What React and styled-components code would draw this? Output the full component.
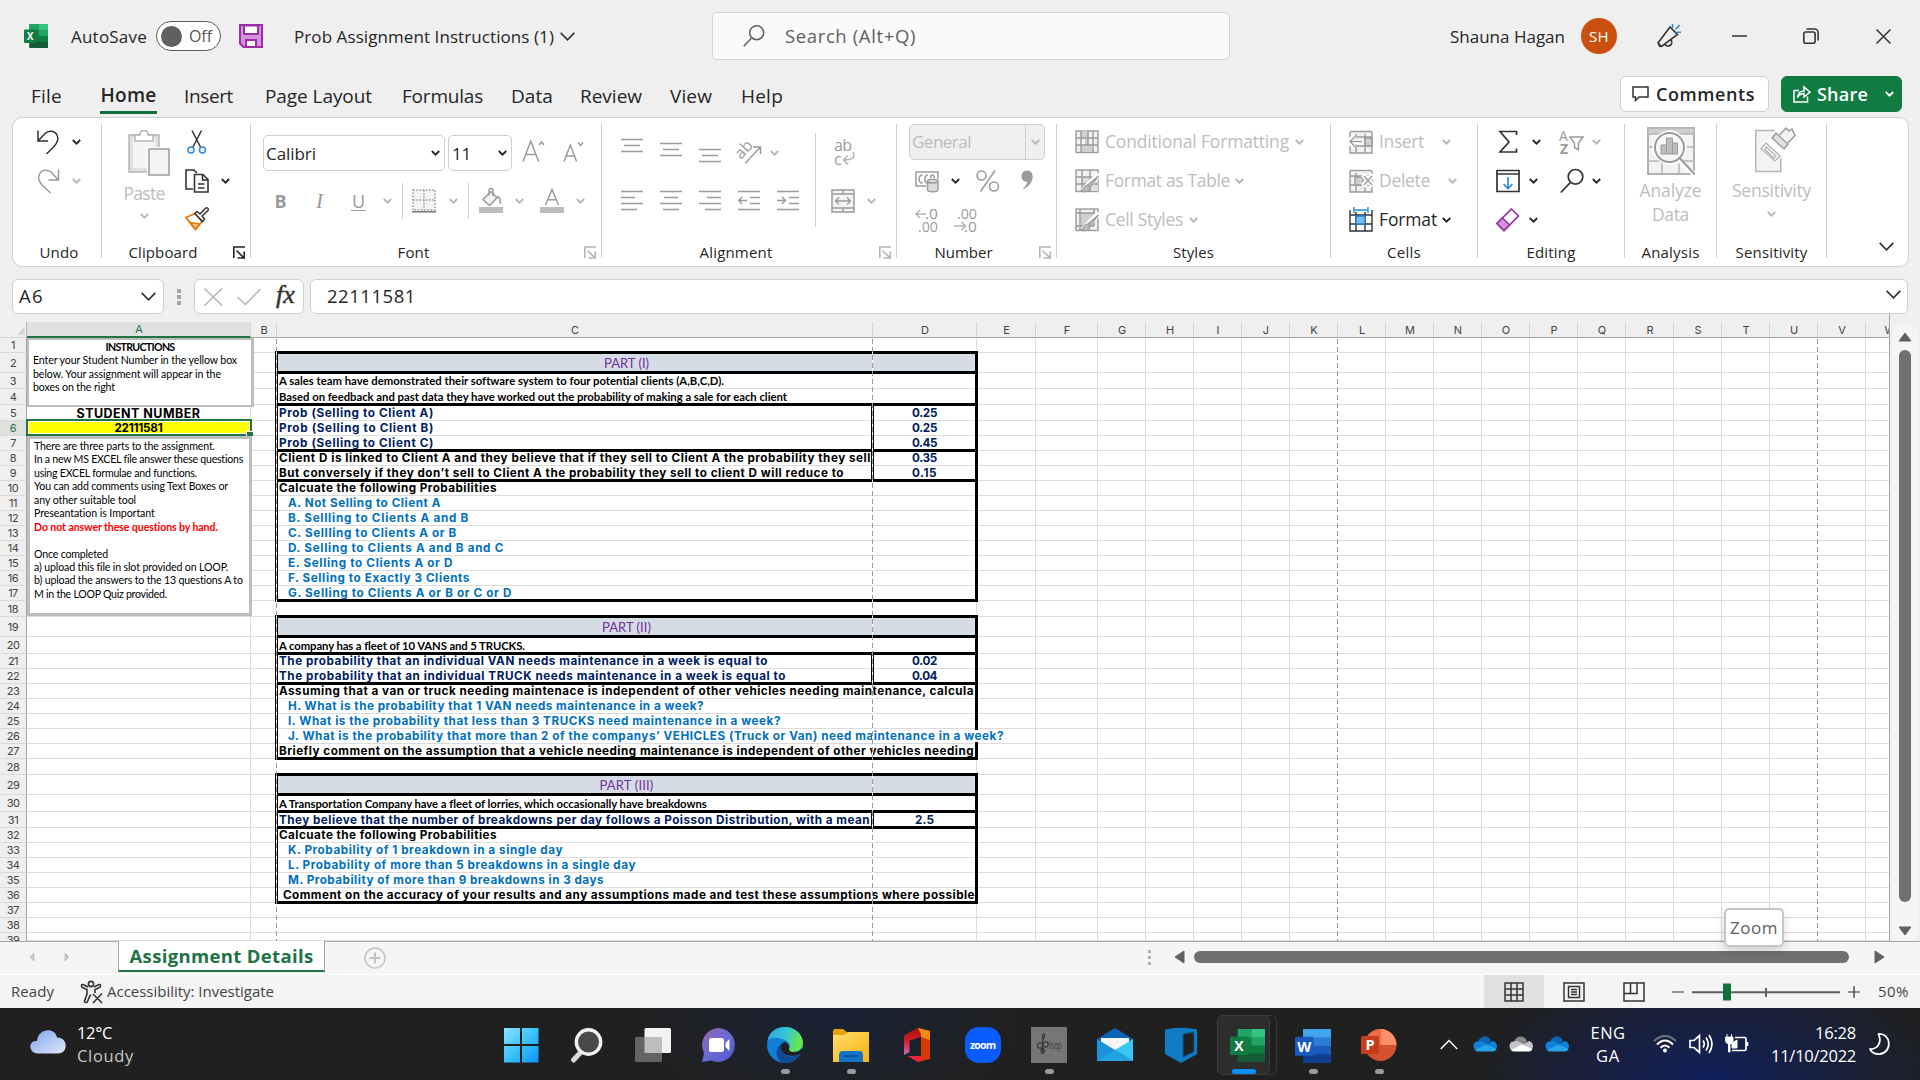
import React, { useLayoutEffect, useRef } from "react";
import styled, { createGlobalStyle, css } from "styled-components";

const GlobalStyle = createGlobalStyle`
  * { box-sizing: border-box; }
  html, body { margin: 0; padding: 0; }
  body {
    width: 1920px;
    height: 1080px;
    overflow: hidden;
    background: #efefef;
    color: #262626;
    font-family: "Open Sans", "Noto Sans", sans-serif;
    line-height: 1;
  }
  svg { display: block; flex: none; overflow: visible; }
`;

const Txt = styled.span`
  display: inline-block;
  flex: none;
  white-space: pre;
  margin-left: ${(p) => p.$l || 0}px;
`;

// spreads the letters so that the label takes the given width
const Fit = ({ w, l, children }) => {
  const ref = useRef(null);
  useLayoutEffect(() => {
    const el = ref.current;
    el.style.letterSpacing = "0px";
    const natural = el.getBoundingClientRect().width;
    el.style.letterSpacing = `${(w - natural) / el.textContent.length}px`;
  }, [w, children]);
  return (
    <Txt ref={ref} $l={l}>
      {children}
    </Txt>
  );
};

const Svg = styled.svg`
  margin-left: ${(p) => p.$l || 0}px;
  margin-top: ${(p) => p.$t || 0}px;
  fill: none;
  stroke: ${(p) => p.$c || "#333"};
  stroke-width: ${(p) => p.$s || 1.5};
`;

const Icon = ({ w = 24, h = 24, l, t, c, s, children }) => (
  <Svg width={w} height={h} viewBox={`0 0 ${w} ${h}`} $l={l} $t={t} $c={c} $s={s}>
    {children}
  </Svg>
);

const GREY = "#9b9b9b";
const PALE = "#b5b5b5";

const Caret = ({ l, t, c = "#262626" }) => (
  <Icon w={9} h={6} l={l} t={t} c={c} s={1.8}>
    <path d="M0.8 1 L4.5 4.7 L8.2 1" />
  </Icon>
);

const BigCaret = ({ l, t }) => (
  <Icon w={15} h={9} l={l} t={t} s={1.7}>
    <path d="M0.7 0.8 L7.5 7.8 L14.3 0.8" />
  </Icon>
);

/* ---------- title bar ---------- */

const TitleBar = styled.header`
  display: flex;
  align-items: center;
  height: 72px;
  font-size: 17px;
`;

const Toggle = styled.div`
  display: flex;
  align-items: center;
  width: 65px;
  height: 30px;
  margin-left: 9px;
  padding-left: 4px;
  border: 1.5px solid #5c5c5c;
  border-radius: 15px;
  background: #fff;
  color: #555;
  font-size: 16px;
`;

const Knob = styled.i`
  width: 21px;
  height: 21px;
  margin-right: 7px;
  border-radius: 50%;
  background: #606060;
`;

const Search = styled.div`
  display: flex;
  align-items: center;
  width: 518px;
  height: 48px;
  margin-left: 137px;
  padding-left: 30px;
  border: 1px solid #d2d2d2;
  border-radius: 5px;
  background: #fafafa;
  color: #606060;
  font-size: 18.5px;
`;

const Avatar = styled.div`
  display: flex;
  align-items: center;
  justify-content: center;
  width: 36px;
  height: 36px;
  margin-left: 16px;
  border-radius: 50%;
  background: #ca5010;
  color: #fff;
  font-size: 15px;
`;

const BookLogo = ({ w = 24, h = 24, l, t, letter = "X" }) => {
  const shades =
    letter === "X"
      ? ["#21a366", "#33c481", "#21a366", "#107c41", "#185c37", "#107c41"]
      : ["#41a5ee", "#41a5ee", "#2b7cd3", "#185abd", "#103f91", "#185abd"];
  return (
    <Svg width={w} height={h} viewBox="0 0 36 33" preserveAspectRatio="none" $l={l} $t={t}>
      <g stroke="none">
        <rect x="8" y="0" width="28" height="33" rx="1.5" fill={shades[3]} />
        <rect x="8" y="0" width="14" height="8.5" fill={shades[0]} />
        <rect x="22" y="0" width="14" height="8.5" fill={shades[1]} />
        <rect x={letter === "X" ? 22 : 8} y="8.5" width={letter === "X" ? 14 : 28} height="8" fill={shades[2]} />
        <rect x="8" y="24.5" width="28" height="8.5" rx="1.5" fill={shades[4]} />
        <rect x="0" y="7.5" width="18.5" height="18.5" rx="1.6" fill={shades[5]} />
        <text x="9.2" y="22" textAnchor="middle" fontFamily="Open Sans, sans-serif" fontWeight="700" fontSize="14.5" fill="#fff">
          {letter}
        </text>
      </g>
    </Svg>
  );
};

const Title = () => (
  <TitleBar>
    <BookLogo l={24} />
    <Fit w={76} l={23}>AutoSave</Fit>
    <Toggle>
      <Knob />
      <Fit w={23}>Off</Fit>
    </Toggle>
    <Icon l={18} c="#9a2fa3" s={2}>
      <path d="M1 1 H23 V23 H4.5 L1 19.5 Z" fill="#d592dd" />
      <rect x="5" y="1.5" width="14" height="8.5" fill="#fff" />
      <rect x="7" y="16" width="10" height="7" fill="#fff" />
    </Icon>
    <Fit w={260} l={31}>Prob Assignment Instructions (1)</Fit>
    <BigCaret l={6} />
    <Search>
      <Icon w={22} h={22} c="#606060">
        <circle cx="13.7" cy="7.7" r="7" />
        <path d="M8.8 12.8 L0.8 21.3" />
      </Icon>
      <Fit w={131} l={20}>Search (Alt+Q)</Fit>
    </Search>
    <Fit w={115} l={220}>Shauna Hagan</Fit>
    <Avatar>
      <Fit w={20}>SH</Fit>
    </Avatar>
    <Icon l={40} s={1.6}>
      <path d="M13 3 L20.5 10.5 L4.5 22.5 L1 19 Z M1.5 20 L3 23 M8 20.5 a3.4 3.4 0 1 0 6 -4.5" />
      <path d="M15.5 0 V4 M18.5 5.5 L22.5 1 M20 8.3 H24" stroke="#2a8dd4" />
    </Icon>
    <Icon w={15} h={2} l={51}>
      <path d="M0 1 H15" />
    </Icon>
    <Icon w={16} h={16} l={56} s={1.6}>
      <rect x="0.8" y="4" width="11.3" height="11.3" rx="2" />
      <path d="M3.5 1 H11.5 a3.6 3.6 0 0 1 3.6 3.6 V12.5" />
    </Icon>
    <Icon w={15} h={15} l={57}>
      <path d="M0.5 0.5 L14.5 14.5 M14.5 0.5 L0.5 14.5" />
    </Icon>
  </TitleBar>
);

/* ---------- ribbon tabs ---------- */

const TabBar = styled.nav`
  display: flex;
  align-items: center;
  height: 45px;
  padding-top: 3px;
  font-size: 19px;
`;

const ActiveTab = styled.span`
  display: flex;
  align-items: center;
  justify-content: center;
  width: 57px;
  height: 35px;
  margin-left: 38px;
  padding-top: 1px;
  border-bottom: 3px solid #0f703b;
  font-weight: 600;
`;

const Pill = styled.div`
  display: flex;
  align-items: center;
  width: ${(p) => p.$w}px;
  height: 36px;
  margin-top: -5px;
  margin-left: ${(p) => p.$l}px;
  padding-left: ${(p) => p.$pad}px;
  border: 1px solid ${(p) => (p.$green ? "#107c41" : "#cfcfcf")};
  border-radius: 6px;
  background: ${(p) => (p.$green ? "#107c41" : "#fff")};
  color: ${(p) => (p.$green ? "#fff" : "#262626")};
  font-size: 18px;
  font-weight: 600;
`;

const Tabs = () => (
  <TabBar>
    <Fit w={31} l={31}>File</Fit>
    <ActiveTab>
      <Fit w={56}>Home</Fit>
    </ActiveTab>
    <Fit w={49} l={27}>Insert</Fit>
    <Fit w={107} l={32}>Page Layout</Fit>
    <Fit w={81} l={30}>Formulas</Fit>
    <Fit w={42} l={28}>Data</Fit>
    <Fit w={62} l={27}>Review</Fit>
    <Fit w={42} l={28}>View</Fit>
    <Fit w={42} l={29}>Help</Fit>
    <Pill $w={149} $l={837} $pad={11}>
      <Icon w={17} h={16}>
        <path d="M1 1 H16 V11 H7 L3.5 14.5 V11 H1 Z" />
      </Icon>
      <Fit w={99} l={7}>Comments</Fit>
    </Pill>
    <Pill $green $w={121} $l={12} $pad={11}>
      <Icon w={18} h={18} c="#fff">
        <path d="M6 5.5 H1 V17 H14.5 V11.5 M4.5 12.5 C5 8 8 6 11 6 V2 L17 7.3 L11 12 V8.6 C8 8.6 6 10 4.5 12.5 Z" />
      </Icon>
      <Fit w={51} l={6}>Share</Fit>
      <Caret l={17} c="#fff" />
    </Pill>
  </TabBar>
);

/* ---------- ribbon ---------- */

const Ribbon = styled.section`
  display: flex;
  width: 1897px;
  height: 150px;
  margin-left: 12px;
  border: 1px solid #d0d0d0;
  border-radius: 10px;
  background: #fff;
`;

const Divider = styled.i`
  flex: none;
  width: 1px;
  height: ${(p) => p.$h || 134}px;
  margin-top: ${(p) => p.$t ?? 6}px;
  margin-left: ${(p) => p.$l || 0}px;
  background: #cfcfcf;
`;

const GroupBox = styled.div`
  display: flex;
  flex-direction: column;
  flex: none;
  width: ${(p) => p.$w}px;
`;

const GroupBody = styled.div`
  display: flex;
  height: 121px;
  padding-top: ${(p) => p.$pt || 4}px;
`;

const GroupFoot = styled.div`
  display: flex;
  align-items: center;
  height: 26px;
  padding-left: ${(p) => p.$pl || 0}px;
  font-size: 15px;
  > div {
    display: flex;
    flex: 1;
    justify-content: center;
  }
`;

const Col = styled.div`
  display: flex;
  flex-direction: column;
  flex: none;
  width: ${(p) => (p.$w ? p.$w + "px" : "auto")};
  align-items: ${(p) => (p.$center ? "center" : "stretch")};
  margin-left: ${(p) => p.$l || 0}px;
`;

const Row = styled.div`
  display: flex;
  align-items: center;
  height: ${(p) => p.$h || 39}px;
  margin-top: ${(p) => p.$t || 0}px;
  padding-left: ${(p) => p.$pl || 0}px;
  color: ${(p) => (p.$off ? "#bdbdbd" : "#262626")};
  font-size: 17.5px;
`;

const Faded = styled.div`
  margin-top: ${(p) => p.$t}px;
  color: #bdbdbd;
  font-size: 17.5px;
`;

const Group = ({ w, pt, name, nameW, namePad, launcher, children }) => (
  <>
    <GroupBox $w={w}>
      <GroupBody $pt={pt}>{children}</GroupBody>
      <GroupFoot $pl={namePad}>
        <div>
          <Fit w={nameW}>{name}</Fit>
        </div>
        {launcher && (
          <Icon w={26} h={13} s={1.6} c={launcher}>
            <path d="M9.8 12 V1 H21 M12.5 4.5 L19.5 11.5 M20.2 5.5 V12 H13.5" />
          </Icon>
        )}
      </GroupFoot>
    </GroupBox>
    <Divider />
  </>
);

const Field = styled.div`
  display: flex;
  align-items: center;
  justify-content: space-between;
  width: ${(p) => p.$w}px;
  height: 36px;
  margin-left: ${(p) => p.$l}px;
  padding: 0 4px 0 2px;
  border: 1px solid #cfcfcf;
  border-radius: 5px;
  background: ${(p) => (p.$off ? "#efefef" : "#fff")};
  color: ${(p) => (p.$off ? "#bdbdbd" : "#262626")};
  font-size: 17px;
`;

const Letter = styled.span`
  width: 15px;
  margin-left: ${(p) => p.$l}px;
  text-align: center;
  color: ${GREY};
  font-size: 18px;
  ${(p) => p.$b && "font-weight: 700;"}
  ${(p) => p.$i && 'font-style: italic; font-family: "Liberation Serif", serif; font-size: 21px;'}
  ${(p) => p.$u && "border-bottom: 1.5px solid #9b9b9b;"}
`;

const Lines = ({ l, t, rows }) => (
  <Icon w={22} h={22} l={l} t={t} c={GREY} s={1.5}>
    {rows.map(([x, w], i) => (
      <path key={i} d={`M${x} ${1.5 + i * 6} h${w}`} />
    ))}
  </Icon>
);

const Indent = ({ l, out }) => (
  <Icon w={22} h={22} l={l} c={GREY}>
    <path d="M0 1.5 H22 M12 7.5 H22 M12 13.5 H22 M0 19.5 H22" />
    <path d={out ? "M9 10.5 H1 M4 7 L0.8 10.5 L4 14" : "M0 10.5 H8 M5 7 L8.4 10.5 L5 14"} />
  </Icon>
);

const Grid = ({ l, kind }) => (
  <Icon l={l} c={GREY} s={1.4}>
    <rect x="1" y="1" width="22" height="21.5" fill="#f1f1f1" />
    {kind === "cond" && (
      <path d="M6 1 h7 v7 h-7z M6 15 h11 v7 h-11z M10 8 h3 v7 h-3z" fill="#cfcfcf" stroke="none" />
    )}
    {kind === "table" && <path d="M7 8 h16 v14 h-16z" fill="#dedede" stroke="none" />}
    {kind === "cell" && <path d="M5 5 h14 v13 h-14z" fill="#cfcfcf" stroke="none" />}
    {kind === "cond" && <path d="M1 8 H23 M1 15 H23 M6 1 V22 M13 1 V15 M18 1 V22" />}
    {kind === "table" && <path d="M1 8 H23 M1 15 H23 M7 1 V22 M15 1 V22" />}
    {kind === "cell" && <path d="M1 5 H23 M5 1 V22 M19 1 V18 M1 18 H19" />}
    {kind !== "cond" && (
      <>
        <path d="M24 5 L13 17 L8 23" stroke="#fff" strokeWidth="6" />
        <path d="M23.5 7 L15 18.5 L12.5 16 Z M12.5 16 C9 16 10 20 6 22 C11 24 15 22 15 18.5 Z" fill="#bdbdbd" strokeWidth="1.2" />
      </>
    )}
  </Icon>
);

const CellsIcon = ({ kind }) => {
  const on = kind === "format";
  return (
    <Icon l={18} c={on ? "#333" : GREY} s={1.4}>
      <path d="M1 2 V23 H23 V2 M1 7 H23 M1 16 H23 M7 4 V23 M16 4 V23" fill={on ? "none" : "#f1f1f1"} />
      {on && (
        <>
          <rect x="7" y="8" width="9" height="8" fill="#7cbdf0" stroke="#1a7bd0" />
          <path d="M5 2 H19 M5 -1 V5 M19 -1 V5" stroke="#2a8dd4" />
        </>
      )}
      {kind === "insert" && (
        <>
          <path d="M1 1.5 H23 M16 8 h7 v8 h-7z" fill="#cfcfcf" />
          <path d="M14 11.5 H0 M6 5.5 L0 11.5 L6 17.5" stroke="#fff" strokeWidth="5" />
          <path d="M13 11.5 H1 M6.5 6 L1 11.5 L6.5 17" />
        </>
      )}
      {kind === "delete" && (
        <>
          <path d="M1 1.5 H23 M6 8 h8 v8 h-8z" fill="#cfcfcf" />
          <path d="M14 5.5 L24 17 M24 5.5 L14 17" stroke="#fff" strokeWidth="5" />
          <path d="M15 7 L23 16 M23 7 L15 16" />
        </>
      )}
    </Icon>
  );
};

const svgText = (x, y, size, t, extra) => (
  <text x={x} y={y} fontSize={size} fill={GREY} stroke="none" fontFamily="Open Sans, sans-serif" {...extra}>
    {t}
  </text>
);

const RibbonBar = () => (
  <Ribbon>
    <Group w={88} name="Undo" nameW={39} namePad={4}>
      <Col $l={24}>
        <Row>
          <Icon>
            <path d="M1 0.5 V11 H11 M1.5 10.5 L8 3.5 C12 -0.5 18 1 20 5 C22 9 20 13 17.5 16 L9.5 24" />
          </Icon>
          <Caret l={11} />
        </Row>
        <Row>
          <Icon c={GREY}>
            <path d="M21.5 0.5 V11 H11.5 M21 10.5 L14.5 3.5 C10.5 -0.5 4.5 1 2.5 5 C0.5 9 2.5 13 5 16 L13.5 24" />
          </Icon>
          <Caret l={11} c={PALE} />
        </Row>
      </Col>
    </Group>

    <Group w={148} name="Clipboard" nameW={69} launcher="#262626">
      <Col $w={46} $l={19} $center>
        <Icon w={42} h={46} l={10} t={8} c={PALE}>
          <rect x="1" y="5" width="30" height="37" fill="#e1e1e1" />
          <rect x="5" y="9" width="22" height="29" fill="#f5f5f5" stroke="none" />
          <path d="M7 11 V5 H12 C12 -1 20 -1 20 5 H25 V11 Z" fill="#fff" />
          <rect x="19" y="17" width="24" height="30" fill="#fff" stroke="none" />
          <rect x="21" y="19" width="20" height="26" fill="#f3f3f3" stroke="#9b9b9b" />
        </Icon>
        <Faded $t={9}>
          <Fit w={41}>Paste</Fit>
        </Faded>
        <Caret t={10} c={PALE} />
      </Col>
      <Col $l={18}>
        <Row $pl={2}>
          <Icon w={20}>
            <path d="M5 0.5 L14 18 M14.5 0.5 L5.5 18" />
            <circle cx="4" cy="20" r="3" stroke="#2a8dd4" />
            <circle cx="15.5" cy="20" r="3" stroke="#2a8dd4" />
          </Icon>
        </Row>
        <Row>
          <Icon s={1.6}>
            <path d="M8 20 H1 V1 H9 L12 4" />
            <path d="M9.5 5.5 H18 L23 10.5 V23 H9.5 Z M17.5 5.5 V11 H23 M13 15 H19.5 M13 19 H19.5" />
          </Icon>
          <Caret l={12} />
        </Row>
        <Row>
          <Icon t={-2}>
            <path d="M1 10.5 L10 6.5 L17 14.5 L10.5 22.5 Z" fill="#fff" stroke="#e57706" strokeWidth="1.8" />
            <path d="M5 15.5 L14.5 17 L10.5 22 Z" fill="#f9c683" stroke="#e57706" />
            <path d="M10 6.5 L12 4.5 L15 7 L20.5 1.2 C22 -0.2 24.2 2 23 3.5 L17 9 L19.5 12 L17.5 14.5 Z" fill="#fff" />
          </Icon>
        </Row>
      </Col>
    </Group>

    <Group w={350} pt={17} name="Font" nameW={32} namePad={1} launcher={PALE}>
      <Col>
        <Row $h={36}>
          <Field $w={182} $l={12}>
            <Fit w={50}>Calibri</Fit>
            <Caret />
          </Field>
          <Field $w={64} $l={3}>
            <Fit w={19} l={1}>11</Fit>
            <Caret />
          </Field>
          <Icon l={10} t={-4} c={GREY}>
            <path d="M1 22.5 L8.8 2 L16.6 22.5 M3.8 15.5 H13.8 M17 6 L19.5 3 L22 6" />
          </Icon>
          <Icon l={17} t={-4} c={GREY}>
            <path d="M1 22.5 L7.3 6 L13.6 22.5 M3.2 17 H11.4 M15 3.5 L17.5 6.5 L20 3.5" />
          </Icon>
        </Row>
        <Row $h={36} $t={12} $pl={22}>
          <Letter $b>B</Letter>
          <Letter $l={24} $i>I</Letter>
          <Letter $l={24} $u>U</Letter>
          <Caret l={17} c={PALE} />
          <Divider $h={36} $t={0} $l={10} />
          <Icon l={9} c={GREY} h={24}>
            <rect x="1" y="1" width="22" height="20" fill="#f3f3f3" strokeDasharray="1.6 1.6" />
            <path d="M12 1 V21 M1 11 H23" strokeDasharray="1.6 1.6" />
            <path d="M0 22.8 H24" stroke="#777" />
          </Icon>
          <Caret l={13} c={PALE} />
          <Divider $h={36} $t={0} $l={10} />
          <Icon l={10} c={GREY}>
            <rect x="0" y="18" width="24" height="6" fill="#bdbdbd" stroke="none" />
            <path d="M4 10.5 L12 2.5 L18 9 L10.5 16.5 Z" fill="#f3f3f3" />
            <path d="M10 6.5 V1.5 a2 2 0 0 1 4 0 V7 M18 7 Q22 9 21.3 15" />
          </Icon>
          <Caret l={12} c={PALE} />
          <Icon l={16} c={GREY}>
            <rect x="0" y="18" width="24" height="6" fill="#bdbdbd" stroke="none" />
            <path d="M5.5 16 L12 0.5 L18.5 16 M7.8 10.8 H16.2" />
          </Icon>
          <Caret l={12} c={PALE} />
        </Row>
      </Col>
    </Group>

    <Group w={294} pt={15} name="Alignment" nameW={73} launcher={PALE}>
      <Col $w={213}>
        <Row $h={38} $pl={19}>
          <Lines t={-6} rows={[[0, 22], [3, 16], [0, 22]]} />
          <Lines l={17} t={2} rows={[[0, 22], [3, 16], [0, 22]]} />
          <Lines l={17} t={14} rows={[[0, 22], [3, 16], [0, 22]]} />
          <Icon l={16} c={GREY}>
            {svgText(-1, 16, 16, "ab", { transform: "rotate(-48 6 12)" })}
            <path d="M8 23.5 L23 7.5 M16 7 H23.5 V14" />
          </Icon>
          <Caret l={9} t={1} c={PALE} />
        </Row>
        <Row $h={36} $t={12} $pl={19}>
          <Lines rows={[[0, 22], [0, 14], [0, 22], [0, 16]]} />
          <Lines l={17} rows={[[0, 22], [4, 14], [0, 22], [3, 16]]} />
          <Lines l={17} rows={[[0, 22], [8, 14], [0, 22], [6, 16]]} />
          <Indent l={17} out />
          <Indent l={17} />
        </Row>
      </Col>
      <Divider $h={94} $t={0} />
      <Col>
        <Row $h={40} $pl={18}>
          <Icon w={22} c={PALE}>
            {svgText(0, 10, 16, "ab", { textLength: 18 })}
            {svgText(0, 23.5, 16, "c")}
            <path d="M19 11 C22 17 17 19.5 9.5 19 M14 14.5 L9.5 19 L14 23.5" />
          </Icon>
        </Row>
        <Row $h={36} $t={10} $pl={15}>
          <Icon c={GREY}>
            <rect x="1" y="1" width="22" height="22" fill="#f3f3f3" />
            <path d="M1 5 H23 M1 19 H23 M12 1 V5 M12 19 V23 M4.5 12 H19.5 M8 8.5 L4.5 12 L8 15.5 M16 8.5 L19.5 12 L16 15.5" />
          </Icon>
          <Caret l={12} c={PALE} />
        </Row>
      </Col>
    </Group>

    <Group w={159} name="Number" nameW={58} launcher={PALE}>
      <Col>
        <Row>
          <Field $off $w={136} $l={12}>
            <Fit w={59}>General</Fit>
            <Divider $h={34} $t={0} $l={48} />
            <Caret c={PALE} />
          </Field>
        </Row>
        <Row $pl={18}>
          <Icon c={GREY} h={22}>
            <path d="M1 2 H23 V9 M1 2 V16 H11" fill="none" />
            <path d="M7.5 5 C3 5 3 13 7.5 13 M13 5 C9 5 9 13 12 13 M19.5 8 C19 4 15.5 4 15.5 8" />
            <path d="M12.5 11 V19.5 C12.5 22.5 23 22.5 23 19.5 V11 C23 8.5 12.5 8.5 12.5 11 C12.5 13.5 23 13.5 23 11" fill="#dcdcdc" />
          </Icon>
          <Caret l={12} />
          <Icon l={16} c={GREY}>
            <circle cx="5.5" cy="6.5" r="4.5" />
            <circle cx="18" cy="17.5" r="4.5" />
            <path d="M19 1.5 L4.5 22.5" />
          </Icon>
          <Icon w={12} h={20} l={21} t={-2} c={GREY}>
            <path d="M5.8 0.5 C12.5 0.5 13.5 8.5 9 14 C7 16.5 4.5 18.5 1.5 19.2 C4.5 16.5 6.3 14 6.3 11.6 C-1.2 12.6 -1.2 0.5 5.8 0.5Z" fill={GREY} stroke="none" />
          </Icon>
        </Row>
        <Row $pl={18}>
          <Icon c={PALE}>
            {svgText(10, 10.5, 14, ".0", { textLength: 13, lengthAdjust: "spacingAndGlyphs" })}
            {svgText(3, 24, 14, ".00", { textLength: 20, lengthAdjust: "spacingAndGlyphs" })}
            <path d="M11 6 H1 M5 2 L1 6 L5 10" />
          </Icon>
          <Icon l={15} c={PALE}>
            {svgText(3, 10.5, 14, ".00", { textLength: 20, lengthAdjust: "spacingAndGlyphs" })}
            {svgText(10, 24, 14, ".0", { textLength: 13, lengthAdjust: "spacingAndGlyphs" })}
            <path d="M0 18 H11 M7.5 14 L11.5 18 L7.5 22" />
          </Icon>
        </Row>
      </Col>
    </Group>

    <Group w={273} name="Styles" nameW={41}>
      <Col>
        <Row $off>
          <Grid l={18} kind="cond" />
          <Fit w={184} l={6}>Conditional Formatting</Fit>
          <Caret l={6} c={PALE} />
        </Row>
        <Row $off>
          <Grid l={18} kind="table" />
          <Fit w={125} l={6}>Format as Table</Fit>
          <Caret l={5} c={PALE} />
        </Row>
        <Row $off>
          <Grid l={18} kind="cell" />
          <Fit w={78} l={6}>Cell Styles</Fit>
          <Caret l={6} c={PALE} />
        </Row>
      </Col>
    </Group>

    <Group w={146} name="Cells" nameW={34}>
      <Col>
        <Row $off>
          <CellsIcon kind="insert" />
          <Fit w={45} l={6}>Insert</Fit>
          <Caret l={18} c={PALE} />
        </Row>
        <Row $off>
          <CellsIcon kind="delete" />
          <Fit w={51} l={6}>Delete</Fit>
          <Caret l={18} c={PALE} />
        </Row>
        <Row>
          <CellsIcon kind="format" />
          <Fit w={58} l={6}>Format</Fit>
          <Caret l={5} />
        </Row>
      </Col>
    </Group>

    <Group w={146} name="Editing" nameW={49}>
      <Col>
        <Row $pl={20}>
          <Icon w={20} s={1.7}>
            <path d="M18.5 5 V1.5 H2 L11 12 L2 22 H18.5 V18.5" />
          </Icon>
          <Caret l={14} />
          <Icon w={25} l={18} c={PALE}>
            {svgText(0, 11, 14, "A")}
            {svgText(1, 24, 14, "Z", { fontWeight: 700 })}
            <path d="M11 7 H24 L19.5 13 V20 L15.5 17.5 V13 Z" stroke={GREY} />
          </Icon>
          <Caret l={8} c={PALE} />
        </Row>
        <Row $pl={18}>
          <Icon s={1.7}>
            <path d="M1 1.5 H23 V22.5 H1 Z M1 5 H23" />
            <path d="M12 8 V19.5 M7.5 15 L12 19.5 L16.5 15" stroke="#2a8dd4" />
          </Icon>
          <Caret l={9} />
          <Icon l={22} s={1.7}>
            <circle cx="15.5" cy="7.8" r="7.3" />
            <path d="M10.5 13.3 L0.8 23.5" />
          </Icon>
          <Caret l={8} />
        </Row>
        <Row $pl={18}>
          <Icon c="#9a2fa3" s={1.7}>
            <path d="M15.5 1 L22.5 8 L8 22.5 L1 15.5 Z" fill="#fff" />
            <path d="M6.5 10 L13.5 17 L8 22.5 L1 15.5 Z" fill="#d592dd" />
          </Icon>
          <Caret l={9} />
        </Row>
      </Col>
    </Group>

    <Group w={91} name="Analysis" nameW={58}>
      <Col $w={91} $center>
        <Icon w={48} h={48} t={5} c={PALE}>
          <rect x="1" y="1" width="46" height="46" fill="#f3f3f3" stroke={GREY} />
          <path d="M1 1 h46 v6 h-46z" fill="#cfcfcf" />
          <path d="M1 20 H47 M1 34 H47 M15 7 V47 M32 7 V47" />
          <path d="M31 32 L47 47" stroke="#fff" strokeWidth="5" />
          <circle cx="22.5" cy="20.5" r="15" fill="#f7f7f7" stroke="#fff" strokeWidth="4" />
          <circle cx="22.5" cy="20.5" r="14.5" stroke={GREY} strokeWidth="2" />
          <path d="M33 31.5 L47.5 47" stroke={GREY} strokeWidth="2" />
          <path d="M14 18 h5.5 v9 h-5.5z M19.5 11 h6 v16 h-6z M25.5 16 h5 v11 h-5z" fill="#bdbdbd" stroke={GREY} strokeWidth="1" />
        </Icon>
        <Faded $t={7}>
          <Fit w={62}>Analyze</Fit>
        </Faded>
        <Faded $t={6}>
          <Fit w={37}>Data</Fit>
        </Faded>
      </Col>
    </Group>

    <Group w={109} name="Sensitivity" nameW={72}>
      <Col $w={109} $center>
        <Icon w={40} h={48} t={5} l={7} c={PALE}>
          <rect x="0.8" y="3.5" width="25" height="41" fill="#f3f3f3" />
          <path d="M24 -1 L42 12 L24 33 L3 22 Z" fill="#fff" stroke="none" />
          <path d="M11 14 L27 29 L21 36 L4.5 21 Z" fill="#fff" stroke="none" />
          <path d="M11 16 L25 29 L20 34 L6 21.5 Z" fill="#fff" />
          <path d="M11.5 20 L21 29 L19 31 L10 22.5 Z" />
          <path d="M21 6 L33 17 L29 22 L17 11 Z" fill="#e1e1e1" stroke={GREY} />
          <path d="M24.5 8 L31 1 L34 4 L37 2 L40 8.5 L33 16" fill="#f3f3f3" stroke={GREY} />
        </Icon>
        <Faded $t={7}>
          <Fit w={79}>Sensitivity</Fit>
        </Faded>
        <Caret t={11} c={PALE} />
      </Col>
    </Group>
    <BigCaret l={52} t={124} />
  </Ribbon>
);

/* ---------- formula bar ---------- */

const FormulaRow = styled.div`
  display: flex;
  height: 35px;
  margin-top: 12px;
  padding-left: 12px;
  font-size: 18.5px;
`;

const FormulaBox = styled.div`
  display: flex;
  align-items: center;
  width: ${(p) => p.$w}px;
  height: 35px;
  margin-left: ${(p) => p.$l || 0}px;
  padding-left: ${(p) => p.$pad}px;
  border: 1px solid #d0d0d0;
  border-radius: 6px;
  background: #fff;
`;

const Fx = styled.span`
  margin-left: 15px;
  margin-top: -4px;
  font: italic 400 26px "Liberation Serif", serif;
  -webkit-text-stroke: 0.5px #333;
  color: #333;
`;

const FormulaBar = () => (
  <FormulaRow>
    <FormulaBox $w={152} $pad={6}>
      <Fit w={25}>A6</Fit>
      <BigCaret l={97} />
    </FormulaBox>
    <Icon w={4} h={16} l={13} t={10}>
      <path d="M0 0 h4 v4 h-4z M0 6 h4 v4 h-4z M0 12 h4 v4 h-4z" fill="#a6a6a6" stroke="none" />
    </Icon>
    <FormulaBox $w={110} $l={13} $pad={9}>
      <Icon w={19} h={18} c={PALE}>
        <path d="M0.5 0.5 L18 17.5 M18 0.5 L0.5 17.5" />
      </Icon>
      <Icon w={24} h={18} l={14} c={PALE}>
        <path d="M0.5 9 L8.5 16.5 L23.5 1" />
      </Icon>
      <Fx>fx</Fx>
    </FormulaBox>
    <FormulaBox $w={1598} $l={6} $pad={16}>
      <Fit w={89}>22111581</Fit>
      <BigCaret l={1470} t={-4} />
    </FormulaBox>
  </FormulaRow>
);

/* ---------- sheet ---------- */

const columnWidths = [224, 26, 596, 104, 59, 62, ...Array(17).fill(48)];
const columnNames = "ABCDEFGHIJKLMNOPQRSTUVW".split("");

const NAVY = "#002060";
const BLUE = "#0070c0";

const rows = [
  { h: 15 },
  { h: 20, part: "PART (I)", w: 45 },
  { h: 16, span: "A sales team have demonstrated their software system to four potential clients (A,B,C,D).", w: 445, lato: true, b: "lr" },
  { h: 16, span: "Based on feedback and past data they have worked out the probability of making a sale for each client", w: 508, lato: true, b: "lrb" },
  { h: 16, a: "STUDENT NUMBER", aw: 124, text: "Prob (Selling to Client A)", w: 155, d: "0.25", c: NAVY, b: "lr" },
  { h: 15, a: "22111581", aw: 48, text: "Prob (Selling to Client B)", w: 155, d: "0.25", c: NAVY, b: "lr" },
  { h: 15, text: "Prob (Selling to Client C)", w: 155, d: "0.45", c: NAVY, b: "lrb" },
  { h: 15, text: "Client D is linked to Client A and they believe that if they sell to Client A the probability they sell", w: 592, d: "0.35", b: "lr" },
  { h: 15, text: "But conversely if they don’t sell to Client A the probability they sell to client D will reduce to", w: 565, d: "0.15", b: "lrb" },
  { h: 15, span: "Calcuate the following Probabilities", w: 218, b: "lr" },
  { h: 15, span: "A. Not Selling to Client A", w: 153, c: BLUE, b: "lr" },
  { h: 15, span: "B. Sellling to Clients A and B", w: 181, c: BLUE, b: "lr" },
  { h: 15, span: "C. Sellling to Clients A or B", w: 169, c: BLUE, b: "lr" },
  { h: 15, span: "D. Selling to Clients A and B and C", w: 216, c: BLUE, b: "lr" },
  { h: 15, span: "E. Selling to Clients A or D", w: 165, c: BLUE, b: "lr" },
  { h: 15, span: "F. Selling to Exactly 3 Clients", w: 182, c: BLUE, b: "lr" },
  { h: 15, span: "G. Selling to Clients A or B or C or D", w: 224, c: BLUE, b: "lrb" },
  { h: 16 },
  { h: 20, part: "PART (II)", w: 49 },
  { h: 17, span: "A company has a fleet of 10 VANS and 5 TRUCKS.", w: 246, lato: true, b: "lrb" },
  { h: 15, text: "The probability that an individual VAN needs maintenance in a week is equal to", w: 489, d: "0.02", c: NAVY, b: "lr" },
  { h: 15, text: "The probability that an individual TRUCK needs maintenance in a week is equal to", w: 507, d: "0.04", c: NAVY, b: "lrb" },
  { h: 15, span: "Assuming that a van or truck needing maintenace is independent of other vehicles needing maintenance, calcula", w: 695, b: "lr" },
  { h: 15, span: "H. What is the probability that 1 VAN needs maintenance in a week?", w: 416, c: BLUE, b: "lr" },
  { h: 15, span: "I. What is the probability that less than 3 TRUCKS need maintenance in a week?", w: 493, c: BLUE, b: "lr" },
  { h: 15, span: "J. What is the probability that more than 2 of the companys’ VEHICLES (Truck or Van) need maintenance in a week?", w: 716, c: BLUE, b: "l", spill: true },
  { h: 15, span: "Briefly comment on the assumption that a vehicle needing maintenance is independent of other vehicles needing", w: 695, b: "lrb" },
  { h: 16 },
  { h: 20, part: "PART (III)", w: 54 },
  { h: 17, span: "A Transportation Company have a fleet of lorries, which occasionally have breakdowns", w: 428, lato: true, b: "lrb" },
  { h: 16, text: "They believe that the number of breakdowns per day follows a Poisson Distribution, with a mean", w: 591, d: "2.5", c: NAVY, b: "lrb" },
  { h: 15, span: "Calcuate the following Probabilities", w: 218, b: "lr" },
  { h: 15, span: "K. Probability of 1 breakdown in a single day", w: 275, c: BLUE, b: "lr" },
  { h: 15, span: "L. Probability of more than 5 breakdowns in a single day", w: 348, c: BLUE, b: "lr" },
  { h: 15, span: "M. Probability of more than 9 breakdowns in 3 days", w: 316, c: BLUE, b: "lr" },
  { h: 15, span: "Comment on the accuracy of your results and any assumptions made and test these assumptions where possible", w: 692, indent: 6, b: "lrb" },
  { h: 15 },
  { h: 15 },
  { h: 8 },
];

const SheetArea = styled.div`
  display: flex;
  height: 627px;
`;

const Sheet = styled.div`
  position: relative;
  width: 1890px;
  height: 627px;
  padding-top: 8px;
  overflow: hidden;
  border-right: 1px solid #a6a6a6;
`;

const lineUp = css`
  display: grid;
  grid-template-columns: 27px ${columnWidths.map((w) => w + "px").join(" ")};
`;

const HeaderRow = styled.div`
  ${lineUp}
  height: 16px;
`;

const ColHead = styled.div`
  display: flex;
  align-items: center;
  justify-content: center;
  padding: 1px 0 0 1px;
  overflow: hidden;
  border-bottom: ${(p) => (p.$on ? "2px solid #217346" : "1px solid #a6a6a6")};
  border-right: 1px solid #d4d4d4;
  background: ${(p) => (p.$on ? "#e0e0e0" : "#efefef")};
  color: ${(p) => (p.$on ? "#217346" : "#444")};
  font: 11px/13px Inter, sans-serif;
`;

const Corner = styled.div`
  border-right: 1px solid #b5b5b5;
  border-bottom: 1px solid #d4d4d4;
  padding: 5px 0 0 17px;
`;

const SheetRow = styled.div`
  ${lineUp}
  height: ${(p) => p.$h}px;
  background: #fff;
`;

const RowHead = styled.div`
  display: flex;
  align-items: ${(p) => (p.$cut ? "flex-start" : "center")};
  justify-content: center;
  padding-top: 1px;
  overflow: hidden;
  border-right: 1px solid #a6a6a6;
  border-bottom: ${(p) => (p.$cut ? 0 : 1)}px solid #d9d9d9;
  background: ${(p) => (p.$on ? "#e0e0e0" : "#efefef")};
  color: ${(p) => (p.$on ? "#217346" : "#444")};
  font: 11px/13px Inter, sans-serif;
  letter-spacing: -0.5px;
`;

const Cell = styled.div`
  position: relative;
  display: flex;
  align-items: center;
  justify-content: ${(p) => (p.$center ? "center" : "flex-start")};
  min-width: 0;
  grid-column: span ${(p) => p.$span || 1};
  padding-left: ${(p) => p.$pad || 0}px;
  padding-top: ${(p) => (p.$low ? 1 : 0)}px;
  border-right: 1px solid ${(p) => (p.$spill ? "transparent" : "#dcdcdc")};
  border-bottom: 1px solid #dcdcdc;
  background: ${(p) => p.$bg || "transparent"};
  color: ${(p) => p.$color || "#000"};
  font: 700 11.7px/13px Inter, sans-serif;
  white-space: nowrap;
  ${(p) => p.$big && "font-size: 12.5px;"}
  ${(p) => p.$lato && "font: 700 11.3px/13px Lato, sans-serif;"}
  ${(p) => p.$title && "font: 400 13px/15px Lato, sans-serif; padding-top: 2px;"}
  ${(p) =>
    p.$b &&
    css`
      &::after {
        content: "";
        position: absolute;
        z-index: 1;
        inset: -2px;
        border: 0 solid #000;
        border-top-width: ${p.$b.includes("t") ? 3 : 0}px;
        border-left-width: ${p.$b.includes("l") ? 3 : 0}px;
        border-right-width: ${p.$b.includes("r") ? 3 : 0}px;
        border-bottom-width: ${p.$b.includes("b") ? 3 : 0}px;
      }
    `}
`;

const PageBreak = styled.i`
  position: absolute;
  z-index: 2;
  top: 24px;
  bottom: 0;
  left: ${(p) => p.$x}px;
  width: 1px;
  background: repeating-linear-gradient(#fff 0 1px, #999 1px 6px, #fff 6px 8px);
`;

const Selection = styled.div`
  position: absolute;
  z-index: 3;
  left: 26px;
  top: 105px;
  width: 226px;
  height: 17px;
  border: 2px solid #217346;
  box-shadow: inset 0 0 0 1px #fff;
  &::after {
    content: "";
    position: absolute;
    right: -3px;
    bottom: -2px;
    width: 6px;
    height: 4px;
    background: #217346;
    border-top: 1px solid #fff;
    border-left: 1px solid #fff;
  }
`;

const Note = styled.div`
  position: absolute;
  z-index: 3;
  left: 27px;
  top: ${(p) => p.$y}px;
  width: ${(p) => p.$w}px;
  height: ${(p) => p.$h}px;
  padding: ${(p) => p.$pad};
  border: 2px solid #bdbdbd;
  border-width: ${(p) => p.$bw};
  background: #fff;
  color: #000;
  font: 10.6px/13.45px Lato, sans-serif;
  b { color: ${(p) => p.$red && "#f00"}; }
`;

const NoteLine = styled.div`
  height: 13.45px;
  text-align: ${(p) => (p.$mid ? "center" : "left")};
`;

const dataCells = (r) => {
  if (r.part) {
    return (
      <Cell $span={2} $center $title $bg="#d6dce4" $color="#7030a0" $b="tlrb">
        <Fit w={r.w}>{r.part}</Fit>
      </Cell>
    );
  }
  if (r.span) {
    return (
      <Cell $span={2} $lato={r.lato} $color={r.c} $b={r.b} $spill={r.spill} $pad={r.indent || (r.c ? 11 : 2)}>
        <Fit w={r.w}>{r.span}</Fit>
      </Cell>
    );
  }
  return (
    <>
      <Cell $color={r.c} $b={r.b} $pad={2} $low={r.h === 16}>
        {r.text && <Fit w={r.w}>{r.text}</Fit>}
      </Cell>
      <Cell $center $color={NAVY} $b={r.b && r.b.replace("l", "")} $low={r.h === 16}>
        {r.d && <Fit w={r.d.length * 6.3}>{r.d}</Fit>}
      </Cell>
    </>
  );
};

const Rail = styled.div`
  display: flex;
  flex-direction: column;
  align-items: center;
  width: 26px;
  height: 620px;
  margin: 9px 0 0 2px;
  padding-top: 9px;
  border-radius: 13px;
  background: #f5f5f5;
`;

const Thumb = styled.i`
  width: 12px;
  height: 552px;
  margin: 8px 0 24px;
  border-radius: 6px;
  background: #707070;
`;

const Triangle = ({ d, w, h, l, t, c = "#606060" }) => (
  <Icon w={w} h={h} l={l} t={t} c={c} s={1}>
    <path d={d} fill={c} strokeLinejoin="round" />
  </Icon>
);

const Spreadsheet = () => (
  <SheetArea>
    <Sheet>
      <HeaderRow>
        <Corner>
          <Triangle w={8} h={8} d="M7 1 V7 H1 Z" c="#d4d4d4" />
        </Corner>
        {columnNames.map((n) => (
          <ColHead key={n} $on={n === "A"}>
            {n}
          </ColHead>
        ))}
      </HeaderRow>
      {rows.map((r, i) => (
        <SheetRow key={i} $h={r.h}>
          <RowHead $on={i === 5} $cut={r.h < 10}>
            {i + 1}
          </RowHead>
          <Cell $center $low={r.h === 16} $big={i === 4} $bg={i === 5 ? "#ff0" : undefined}>
            {r.a && <Fit w={r.aw}>{r.a}</Fit>}
          </Cell>
          <Cell />
          {dataCells(r)}
          {columnNames.slice(4).map((n) => (
            <Cell key={n} />
          ))}
        </SheetRow>
      ))}
      {[276, 872, 1337, 1817].map((x) => (
        <PageBreak key={x} $x={x} />
      ))}
      <Selection />
      <Note $y={24} $w={227} $h={69} $bw="2px 3px 2px 2px" $pad="1px 0 0 4px">
        <NoteLine $mid>
          <b>
            <Fit w={69} l={-4}>INSTRUCTIONS</Fit>
          </b>
        </NoteLine>
        <NoteLine><Fit w={204}>Enter your Student Number in the yellow box</Fit></NoteLine>
        <NoteLine><Fit w={188}>below. Your assignment will appear in the</Fit></NoteLine>
        <NoteLine><Fit w={82}>boxes on the right</Fit></NoteLine>
      </Note>
      <Note $red $y={122} $w={225} $h={180} $bw="3px" $pad="1px 0 0 4px">
        <NoteLine><Fit w={181}>There are three parts to the assignment.</Fit></NoteLine>
        <NoteLine><Fit w={209}>In a new MS EXCEL file answer these questions</Fit></NoteLine>
        <NoteLine><Fit w={163}>using EXCEL formulae and functions.</Fit></NoteLine>
        <NoteLine><Fit w={194}>You can add comments using Text Boxes or</Fit></NoteLine>
        <NoteLine><Fit w={102}>any other suitable tool</Fit></NoteLine>
        <NoteLine><Fit w={121}>Preseantation is Important</Fit></NoteLine>
        <NoteLine>
          <b>
            <Fit w={184}>Do not answer these questions by hand.</Fit>
          </b>
        </NoteLine>
        <NoteLine />
        <NoteLine><Fit w={74}>Once completed</Fit></NoteLine>
        <NoteLine><Fit w={194}>a) upload this file in slot provided on LOOP.</Fit></NoteLine>
        <NoteLine><Fit w={209}>b) upload the answers to the 13 questions A to</Fit></NoteLine>
        <NoteLine><Fit w={133}>M in the LOOP Quiz provided.</Fit></NoteLine>
      </Note>
    </Sheet>
    <Rail>
      <Triangle w={14} h={10} d="M7 1 L13 9 H1 Z" />
      <Thumb />
      <Triangle w={14} h={10} d="M7 9 L13 1 H1 Z" />
    </Rail>
  </SheetArea>
);

/* ---------- sheet tabs and status bar ---------- */

const SheetTabs = styled.div`
  position: relative;
  display: flex;
  height: 34px;
  border-top: 1px solid #a6a6a6;
  border-bottom: 1px solid #fff;
  background: #f5f5f5;
`;

const SheetTab = styled.div`
  display: flex;
  align-items: center;
  justify-content: center;
  width: 207px;
  height: 31px;
  margin: -1px 0 0 48px;
  padding-top: 2px;
  border: 1px solid #a6a6a6;
  border-top: 0;
  border-bottom: 2px solid #217346;
  background: #fff;
  color: #217346;
  font-size: 18.5px;
  font-weight: 700;
`;

const HThumb = styled.i`
  width: 655px;
  height: 12px;
  margin: 9px 0 0 9px;
  border-radius: 6px;
  background: #707070;
`;

const Tooltip = styled.div`
  position: absolute;
  z-index: 5;
  left: 1724px;
  top: -34px;
  display: flex;
  align-items: center;
  justify-content: center;
  width: 60px;
  height: 39px;
  border: 2px solid #c6c6c6;
  border-radius: 5px;
  background: #fff;
  box-shadow: 0 4px 10px rgba(0, 0, 0, 0.15);
  color: #606060;
  font-size: 17px;
`;

const StatusBar = styled.div`
  display: flex;
  align-items: center;
  height: 33px;
  background: #f4f4f4;
  color: #444;
  font-size: 15px;
`;

const ViewButtons = styled.div`
  display: flex;
  margin-left: 1210px;
`;

const ViewButton = styled.div`
  display: flex;
  align-items: center;
  justify-content: center;
  width: 60px;
  height: 33px;
  background: ${(p) => (p.$on ? "#e0e0e0" : "transparent")};
`;

const BottomBars = () => (
  <>
    <SheetTabs>
      <Triangle w={6} h={10} l={29} t={10} d="M5 1 V9 L1 5 Z" c="#c3c3c3" />
      <Triangle w={6} h={10} l={29} t={10} d="M1 1 V9 L5 5 Z" c="#c3c3c3" />
      <SheetTab>
        <Fit w={184}>Assignment Details</Fit>
      </SheetTab>
      <Icon w={22} h={22} l={39} t={5} c="#c3c3c3">
        <circle cx="11" cy="11" r="10" />
        <path d="M11 5.5 V16.5 M5.5 11 H16.5" strokeWidth="2" />
      </Icon>
      <Icon w={3} h={16} l={762} t={8}>
        <path d="M0 0 h3 v3 h-3z M0 6 h3 v3 h-3z M0 12 h3 v3 h-3z" fill="#b0b0b0" stroke="none" />
      </Icon>
      <Triangle w={11} h={14} l={23} t={8} d="M10 1 V13 L1 7 Z" />
      <HThumb />
      <Triangle w={11} h={14} l={25} t={8} d="M1 1 V13 L10 7 Z" />
      <Tooltip>
        <Fit w={48}>Zoom</Fit>
      </Tooltip>
    </SheetTabs>
    <StatusBar>
      <Fit w={43} l={11}>Ready</Fit>
      <Icon w={22} h={22} l={27} s={1.6}>
        <circle cx="10" cy="3" r="2.6" />
        <path d="M7 6 L2 3.5 C0 3 0 6 1.5 6.5 L6 8.5 V13 L3.5 20 C3.5 22 6 22 6.5 20.5 L9 14.5 H10.5 M13 6 L18 3.5 C20 3 20 6 18.5 6.5 L14 8.5 V12 M12 13 L21 22 M21 12.5 L12 22" />
      </Icon>
      <Fit w={167} l={4}>Accessibility: Investigate</Fit>
      <ViewButtons>
        <ViewButton $on>
          <Icon w={20} h={20}>
            <path d="M1 1 H19 V19 H1 Z M1 7 H19 M1 13 H19 M7 1 V19 M13 1 V19" />
          </Icon>
        </ViewButton>
        <ViewButton>
          <Icon w={22} h={20}>
            <path d="M1 1 H21 V19 H1 Z M5.5 4.5 H16.5 V15.5 H5.5 Z M8 7.5 H14 M8 10 H14 M8 12.5 H14" />
          </Icon>
        </ViewButton>
        <ViewButton>
          <Icon w={22} h={20}>
            <path d="M1 1 H21 V19 H1 Z M1 11.5 H14 V1 M7.5 1 V11.5" />
          </Icon>
        </ViewButton>
      </ViewButtons>
      <Icon w={188} h={20} l={8}>
        <path d="M0 10 H12 M176 10 H188 M182 4 V16" strokeWidth="1.2" />
        <path d="M20 10.3 H168 M94 6 V15" stroke="#606060" strokeWidth="2" />
        <rect x="51" y="1.5" width="8" height="17" fill="#0f703b" stroke="none" />
      </Icon>
      <Fit w={31} l={18}>50%</Fit>
    </StatusBar>
  </>
);

/* ---------- taskbar ---------- */

const TaskBar = styled.footer`
  display: flex;
  align-items: center;
  height: 72px;
  background: radial-gradient(ellipse 240px 120px at 1710px 70px, #10205a, rgba(32, 32, 32, 0)),
    radial-gradient(ellipse 190px 110px at 830px 0, #192236, rgba(32, 32, 32, 0)), #202020;
  color: #fff;
  font-size: 16.5px;
`;

const Stack = styled.div`
  display: flex;
  flex-direction: column;
  align-items: ${(p) => p.$align || "flex-start"};
  gap: 7px;
  width: ${(p) => p.$w}px;
  margin-left: ${(p) => p.$l}px;
  padding-top: 1px;
`;

const Muted = styled.span`
  color: #c8c8c8;
`;

const TaskItem = styled.div`
  display: flex;
  flex-direction: column;
  align-items: center;
  width: 66px;
  height: 72px;
  padding-top: 19px;
  &::after {
    content: "";
    width: 9px;
    height: 5px;
    margin-top: 6px;
    border-radius: 3px;
    background: ${(p) => (p.$open ? "#9a9a9a" : "transparent")};
  }
`;

const ActiveTile = styled.div`
  display: flex;
  flex-direction: column;
  align-items: center;
  align-self: flex-start;
  width: 53px;
  height: 60px;
  margin: 7px 10px 0 3px;
  padding-top: 13px;
  padding-left: 7px;
  border: 1px solid #3c3c3c;
  border-radius: 6px;
  background: #2d2d2d;
  box-shadow: 7px 0 0 -1px #202020, 7px 0 0 0 #383838;
  &::after {
    content: "";
    width: 24px;
    height: 5px;
    margin: 7px 7px 0 0;
    border-radius: 3px;
    background: #0a91ff;
  }
`;

const Gradients = () => (
  <defs>
    <linearGradient id="win" x1="0" y1="0" x2="1" y2="1">
      <stop offset="0" stopColor="#8be3ff" />
      <stop offset="0.5" stopColor="#3cc3fb" />
      <stop offset="1" stopColor="#0a93f5" />
    </linearGradient>
    <linearGradient id="chat" x1="0" y1="0" x2="1" y2="1">
      <stop offset="0" stopColor="#9a62a6" />
      <stop offset="0.5" stopColor="#6a6ad6" />
      <stop offset="1" stopColor="#5058c8" />
    </linearGradient>
    <linearGradient id="edge" x1="0" y1="0" x2="1" y2="0.3">
      <stop offset="0" stopColor="#2ba6e8" />
      <stop offset="0.55" stopColor="#34c6d4" />
      <stop offset="1" stopColor="#66e84a" />
    </linearGradient>
    <linearGradient id="folder" x1="0" y1="0" x2="1" y2="1">
      <stop offset="0" stopColor="#ffdd70" />
      <stop offset="1" stopColor="#f8b10c" />
    </linearGradient>
    <linearGradient id="cloud" x1="0" y1="0" x2="1" y2="1">
      <stop offset="0" stopColor="#7ea5ea" />
      <stop offset="1" stopColor="#e0e8fb" />
    </linearGradient>
    <linearGradient id="office" x1="0" y1="0" x2="0" y2="1">
      <stop offset="0" stopColor="#a51212" />
      <stop offset="0.5" stopColor="#d3202a" />
      <stop offset="1" stopColor="#c86ac8" />
    </linearGradient>
  </defs>
);

const OneDrive = ({ l, grey }) => {
  const [a, b, c] = grey ? ["#8a8a8a", "#c3c3c3", "#fff"] : ["#0a64b8", "#1180d8", "#28a4ea"];
  return (
    <Icon w={24} h={16} l={l}>
      <g stroke="none">
        <path d="M5 6 C7 -1 16 -1 18 5 L12 10 Z" fill={a} />
        <path d="M2 14 C-1 10 1 5 5 5.5 C8 4 11 6 14 8 L20 5 C24 6 25 11 23 13 Z" fill={b} />
        <path d="M2 14 L13 8.5 L23.5 13 C22.5 15 21 15.5 19 15.5 H6 C4 15.5 3 15 2 14Z" fill={c} />
      </g>
    </Icon>
  );
};

const Taskbar = () => (
  <TaskBar>
    <Icon w={36} h={24} l={30} t={-4}>
      <Gradients />
      <path d="M8 23.5 C-2 23 -2 10 7 11 C8 -2 25 -3 27 7.5 C38 7 39 23.5 28 23.5 Z" fill="url(#cloud)" stroke="none" />
    </Icon>
    <Stack $l={11} $w={411}>
      <Fit w={35}>12°C</Fit>
      <Muted>
        <Fit w={57}>Cloudy</Fit>
      </Muted>
    </Stack>
    <TaskItem>
      <Icon w={36} h={36} l={-1}>
        <path d="M1 1 H17 V17 H1Z M19 1 H35.5 V17 H19Z M1 19 H17 V35.5 H1Z M19 19 H35.5 V35.5 H19Z" fill="url(#win)" stroke="none" />
      </Icon>
    </TaskItem>
    <TaskItem>
      <Icon w={36} h={36}>
        <path d="M11.5 25.5 L4.5 33" stroke="#d6dade" strokeWidth="5" strokeLinecap="round" />
        <circle cx="19.5" cy="15" r="12.2" fill="#4a4a4a" stroke="#f0f2f3" strokeWidth="3.4" />
      </Icon>
    </TaskItem>
    <TaskItem>
      <Icon w={36} h={36}>
        <rect x="9.5" y="1" width="26.5" height="25" rx="1.5" fill="#f2f2f2" stroke="none" />
        <rect x="0" y="10" width="27" height="25" rx="1.5" fill="#646464" stroke="none" />
        <rect x="9.5" y="10" width="17.5" height="16" fill="#bdbdbd" stroke="none" />
      </Icon>
    </TaskItem>
    <TaskItem>
      <Icon w={36} h={36}>
        <path d="M18 1 A17 17 0 1 1 10 33.5 L1 35 L3 26 A17 17 0 0 1 18 1Z" fill="url(#chat)" stroke="none" />
        <rect x="8" y="11" width="15" height="14" rx="2.5" fill="#fff" stroke="none" />
        <path d="M24.5 16 L28.5 12 V24 L24.5 20Z" fill="#fff" stroke="none" />
      </Icon>
    </TaskItem>
    <TaskItem $open>
      <Icon w={36} h={36}>
        <g stroke="none">
          <circle cx="18" cy="18" r="18" fill="#0f7fd8" />
          <path d="M0.5 14 C2 5 9 0 18 0 C29 0 36 8 36 16 C36 22 31 25 26 25 C22 25 21 23 22.5 21 C24 17 20 13 15 12 C8 10 3 10 0.5 14Z" fill="url(#edge)" />
          <path d="M13.5 17.5 C13 24 18 29.5 24 29.5 C28 29.5 31 28 34 26.5 C29 35 20 37.5 14 35 C8 30 8.5 21 13.5 17.5Z" fill="#124a94" />
          <path d="M22.3 21 C21.5 22.5 22 24.7 26 25 C30 25.3 33.5 23.5 35.2 21 L36.5 25.5 L33.5 27 C28 29.5 15 31 13.5 20 C13.5 14 22 13 22.3 21Z" fill="#202020" />
        </g>
      </Icon>
    </TaskItem>
    <TaskItem $open>
      <Icon w={36} h={36}>
        <g stroke="none">
          <path d="M0 4 Q0 2 2 2 H10 L15 6 H34 V12 H0Z" fill="#e5a200" />
          <path d="M0 8 H11 L15 5 H36 V35 H0Z" fill="url(#folder)" />
          <path d="M6 35 V28 Q6 24 10 24 H26 Q30 24 30 28 V35Z" fill="#1272c8" />
          <path d="M11 29 H25" stroke="#0a4d92" strokeWidth="1.6" strokeLinecap="round" />
        </g>
      </Icon>
    </TaskItem>
    <TaskItem>
      <Icon w={36} h={36}>
        <g stroke="none">
          <path d="M19 1 L22 6 V10 L10.5 13.5 V25 L5 28 V10.5 Q5 8 8 6.5 Z" fill="url(#office)" />
          <path d="M19 1 L31 4 V32 L19 35 L9 29 L22 30.5 V7 Z" fill="#d83b01" />
          <path d="M19 1 L31 4 V13 L22 10 V7Z" fill="#f08a16" />
          <path d="M8.5 29 H22 V34 L19 35 Z" fill="#e8253d" />
        </g>
      </Icon>
    </TaskItem>
    <TaskItem>
      <Icon w={36} h={36}>
        <rect width="36" height="36" rx="14" fill="#0b5cff" stroke="none" />
        <text x="18" y="21.5" textAnchor="middle" fontSize="10.5" fontWeight="700" textLength="26" fontFamily="Open Sans, sans-serif" fill="#fff" stroke="none">zoom</text>
      </Icon>
    </TaskItem>
    <TaskItem $open>
      <Icon w={36} h={36}>
        <rect width="36" height="36" fill="#767676" stroke="none" />
        <g stroke="#3a3a3a" strokeWidth="1.3">
          <circle cx="9" cy="18.5" r="2.6" />
          <circle cx="14.5" cy="17.5" r="2.6" />
          <path d="M11.7 25 V9 C11.7 6 14 6 13.5 9.5 L11.7 13 M11.7 21 C9.5 21 9.5 26 11.7 26.5 C14 26 14 22 11.7 21" />
        </g>
        <text x="18" y="22" fontSize="11" textLength="12.5" lengthAdjust="spacingAndGlyphs" fontFamily="Open Sans, sans-serif" fill="#3a3a3a" stroke="none">loop</text>
      </Icon>
    </TaskItem>
    <TaskItem>
      <Icon w={36} h={36}>
        <g stroke="none">
          <path d="M0 12 L18 1 L36 12 V20 H0Z" fill="#0a63b5" />
          <path d="M4 11 H32 V24 H4Z" fill="#f5f5f5" />
          <path d="M0 12 L36 34 H0Z" fill="#1b93dc" />
          <path d="M36 12 L18 23 L36 34Z" fill="#38c6f4" />
          <path d="M0 34 L18 23 L36 34Z" fill="#23a3e4" />
        </g>
      </Icon>
    </TaskItem>
    <TaskItem>
      <Icon w={36} h={36}>
        <path d="M2 2.5 Q18 -1 34 2.5 V27 L18 36 L2 27Z" fill="#0f7cc4" stroke="none" />
        <path d="M20 7 L31 5 V25 L20 30Z" fill="#202020" stroke="#0a5c98" strokeWidth="1" />
      </Icon>
    </TaskItem>
    <ActiveTile>
      <BookLogo w={35} h={33} />
    </ActiveTile>
    <TaskItem $open>
      <BookLogo w={36} h={34} t={2} letter="W" />
    </TaskItem>
    <TaskItem $open>
      <Icon w={36} h={36}>
        <g stroke="none">
          <circle cx="19.5" cy="18" r="16" fill="#d35230" />
          <path d="M19.5 2 A16 16 0 0 1 35.5 18 H19.5Z" fill="#ff8f6b" />
          <path d="M19.5 2 A16 16 0 0 0 3.5 18 H19.5Z" fill="#ed6c47" />
          <rect x="0" y="9" width="18" height="18" rx="1.6" fill="#c43e1c" />
          <text x="9" y="23.2" textAnchor="middle" fontFamily="Open Sans, sans-serif" fontWeight="700" fontSize="14.5" fill="#fff">P</text>
        </g>
      </Icon>
    </TaskItem>
    <Icon w={18} h={11} l={28} c="#fff">
      <path d="M0.8 10 L9 1.5 L17.2 10" />
    </Icon>
    <OneDrive l={15} />
    <OneDrive l={12} grey />
    <OneDrive l={12} />
    <Stack $l={14} $w={50} $align="center">
      <Fit w={35}>ENG</Fit>
      <Fit w={24}>GA</Fit>
    </Stack>
    <Icon w={24} h={18} l={20} c="#fff" s={2}>
      <path d="M1 6 Q12 -4 23 6" stroke="#70737c" />
      <path d="M4 9.5 Q12 1.5 20 9.5 M7.5 12.8 Q12 8 16.5 12.8" />
      <circle cx="12" cy="15.5" r="2" fill="#fff" stroke="none" />
    </Icon>
    <Icon w={24} h={20} l={12} c="#fff" s={1.7}>
      <path d="M1 6.5 H5 L10.5 1.5 V18.5 L5 13.5 H1Z M14 6.5 Q16.5 10 14 13.5 M17 3.5 Q21.5 10 17 16.5 M20 1 Q26 10 20 19" />
    </Icon>
    <Icon w={24} h={20} l={12} c="#fff" s={1.7}>
      <path d="M10 3.5 H19.5 Q21 3.5 21 5 V15 Q21 16.5 19.5 16.5 H7 M22.5 8 V12" />
      <path d="M0.5 3 H8 V7 Q7.5 9.5 5 10 V18 H3.5 V10 Q1 9.5 0.5 7Z M2 0 V4 M6.5 0 V4 M7 14 V9 L12 6 V14Z" fill="#fff" strokeWidth="0.9" />
    </Icon>
    <Stack $l={16} $w={91} $align="flex-end">
      <Fit w={41}>16:28</Fit>
      <Fit w={85}>11/10/2022</Fit>
    </Stack>
    <Icon w={21} h={22} l={13} c="#fff" s={1.8}>
      <path d="M9.5 1 C22 0 24 19 11 21 C6 21.5 2.5 19 1 16 C9 16.5 13 9 9.5 1Z" strokeLinejoin="round" />
    </Icon>
  </TaskBar>
);

const App = () => (
  <>
    <GlobalStyle />
    <Title />
    <Tabs />
    <RibbonBar />
    <FormulaBar />
    <Spreadsheet />
    <BottomBars />
    <Taskbar />
  </>
);

export default App;
